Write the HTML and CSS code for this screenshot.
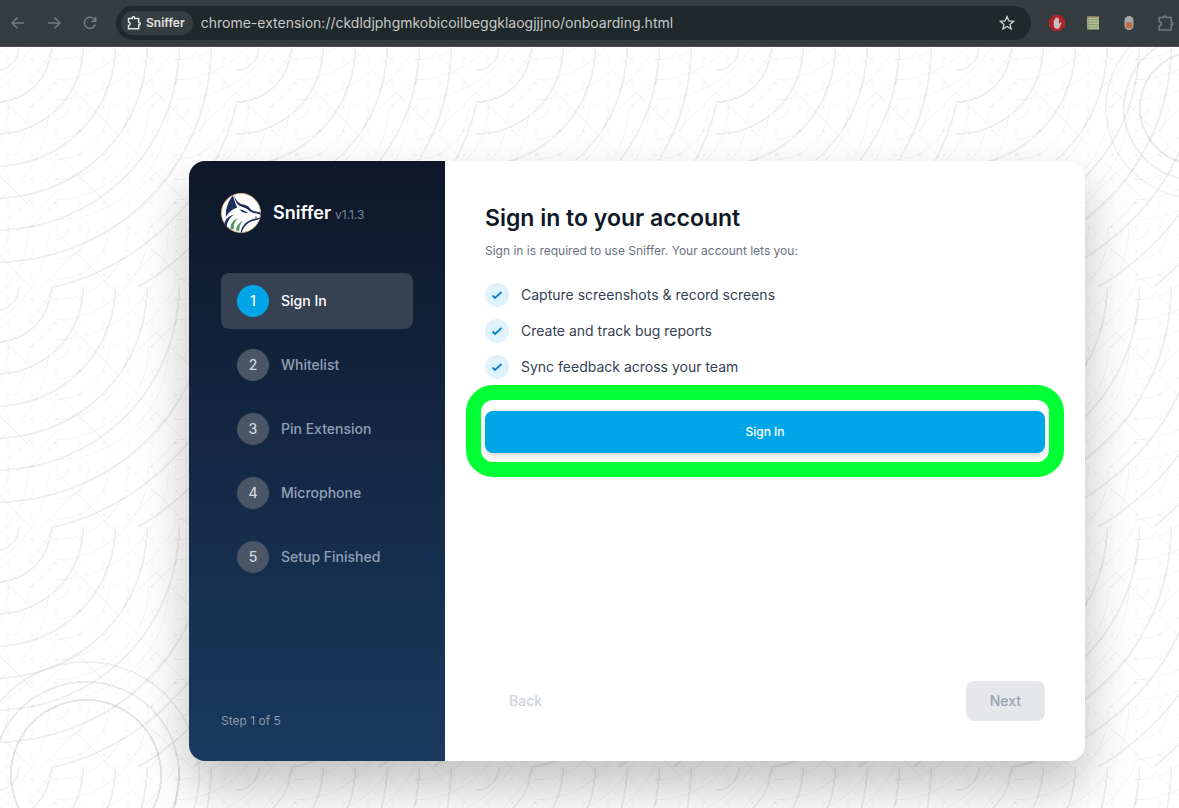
FILE: index.html
```html
<!DOCTYPE html>
<html lang="en">
<head>
<meta charset="utf-8">
<title>Sniffer</title>
<link rel="stylesheet" href="styles.css">
</head>
<body>
<header class="toolbar">
  <div class="nav-buttons">
    <button class="tool" aria-label="Back"><svg width="16" height="16" viewBox="0 0 16 16"><path d="M14 8H2.500M7.500 2.500 2 8l5.500 5.500"/></svg></button>
    <button class="tool" aria-label="Forward"><svg width="16" height="16" viewBox="0 0 16 16"><path d="M2 8h11.500M8.500 2.500 14 8l-5.500 5.500"/></svg></button>
    <button class="tool" aria-label="Reload"><svg width="16" height="16" viewBox="0 0 16 16"><path d="M13.300 9.500A5.600 5.600 0 1 1 12.600 4.600L13.600 6M13.700 2v4.200H9.500"/></svg></button>
  </div>
  <div class="address">
    <span class="chip"><svg width="16" height="16" viewBox="0 0 16 16"><path d="M2.500 3.500h3.800v-.6a1.200 1.200 0 0 1 2.400 0v.6h4v4h.4a1.200 1.200 0 0 1 0 2.400h-.4v3.800H2.500v-3.200c2.200-.2 2.200-3.400 0-3.600Z"/></svg>Sniffer</span>
    <input class="url" aria-label="Address" value="chrome-extension://ckdldjphgmkobicoilbeggklaogjjjno/onboarding.html">
    <button class="tool star" aria-label="Bookmark"><svg width="16" height="16" viewBox="0 0 16 16"><path d="m8 1.600 1.900 4.300 4.700.4-3.600 3.100 1.100 4.600L8 11.500 3.900 14l1.100-4.600-3.600-3.100 4.700-.4Z"/></svg></button>
  </div>
  <div class="extensions">
    <button class="tool" aria-label="Ad blocker"><svg width="16" height="16" viewBox="0 0 16 16"><path class="stop" d="M4.700 0h6.600L16 4.700v6.600L11.300 16H4.700L0 11.300V4.700Z"/><path class="palm" d="M4.800 10V5.200c0-.9 1.200-.9 1.200 0V3.800c0-1 1.300-1 1.300 0V3c0-1 1.400-1 1.400 0v1c0-.9 1.300-.9 1.300 0v5.200l1.200-1.700c.6-.7 1.500-.2 1.200.5l-1.700 4.200c-.5 1.100-1.200 1.600-2.500 1.600-2.300 0-3.400-1.300-3.400-3.800Z"/></svg></button>
    <button class="tool" aria-label="Notes"><svg width="16" height="16" viewBox="0 0 16 16"><path class="note" d="M2 1.500h12v13H2Z"/><path class="note-lines" d="M4 4.500h10M4 7h10M4 9.500h10M4 12h10"/><path class="note-edge" d="M2 2h12M3 2v12"/></svg></button>
    <button class="tool" aria-label="Recorder"><svg width="16" height="16" viewBox="0 0 16 16"><rect class="pill" x="3.500" y="1" width="9" height="14" rx="4.500"/><circle class="record" cx="8" cy="10.300" r="3.300"/></svg></button>
    <button class="tool" aria-label="Extensions"><svg width="18" height="16" viewBox="0 0 18 16"><path d="M2.200 2.500h4.300v-.3a1.300 1.300 0 0 1 2.600 0v.3h5v5h.6a1.200 1.200 0 0 1 0 2.400h-.6v5H2.200v-4c2.900-.3 2.900-4.100 0-4.400Z"/></svg></button>
  </div>
</header>
<main class="page">
  <div class="card">
    <aside class="sidebar">
      <div class="brand">
        <svg class="logo" width="40" height="40" viewBox="0 0 40 40" aria-hidden="true">
          <circle class="badge" cx="20" cy="20" r="19.500"/>
          <path class="navy" d="M11.700 2.500C7.500 8 4.500 15 4.800 24c3-4.500 6-7.500 11.500-9.400C14.500 11 13.200 6.500 11.700 2.500Z"/>
          <path class="navy" d="M12.500 1.800c2.300 4.300 4 8.500 9.500 9.800 4.300.8 6 2 7.500 4.700 2.800 2 6.500 2.500 10 3.200l.3 3.200c-1-1.500-2.300-2-4-2.100-3.500-.4-6.500-1.500-8.400-3.600-2.300-2.700-6.600-2.900-9.400-4.600C15 10.500 14 6 12.500 1.800Z"/>
          <path class="navy" d="M18.500 16.500c3 .3 5 1.300 8.500 3.500-3.200.1-5-.3-6.300-1.400Z"/>
          <path class="navy" d="M39.800 24.300c-1.200 2-3.500 2.800-6.200 3.100-5.500 1-10.600 4.700-12.800 12.200l-1.200.1C20.800 32 26 27.700 31.500 26.200c3-.8 6-.8 8.300-1.900Z"/>
          <path class="navy" d="M13 21.500c-5.500 1.500-9.700 5-9.500 10.300l2 2.300C6.300 28.500 8.500 24.500 13 21.500Z"/>
          <path class="green" d="M17 25c-4.500 1.700-7.800 5.700-7.500 11l3.200.6C12.500 32 13.500 28.500 17 25Z"/>
          <path class="green" d="M22 27.500c-4 2.300-6.700 5.500-6.800 9.800l3 .8c0-4.200 1-7.400 3.800-10.600Z"/>
          <path class="green" d="m33.700 23.300 2.200.4.100 1.500-1.500.1Z"/>
        </svg>
        <span class="brand-name">Sniffer</span>
        <span class="version">v1.1.3</span>
      </div>
      <ol class="steps">
        <li class="step current" aria-current="step"><span class="number">1</span>Sign In</li>
        <li class="step"><span class="number">2</span>Whitelist</li>
        <li class="step"><span class="number">3</span>Pin Extension</li>
        <li class="step"><span class="number">4</span>Microphone</li>
        <li class="step"><span class="number">5</span>Setup Finished</li>
      </ol>
      <p class="progress">Step 1 of 5</p>
    </aside>
    <section class="content">
      <h1 class="title">Sign in to your account</h1>
      <p class="lead">Sign in is required to use Sniffer. Your account lets you:</p>
      <ul class="benefits">
        <li class="benefit"><span class="tick"><svg width="12" height="12" viewBox="0 0 12 12"><path d="m1.500 6.500 2.500 2.500 6.500-6"/></svg></span>Capture screenshots &amp; record screens</li>
        <li class="benefit"><span class="tick"><svg width="12" height="12" viewBox="0 0 12 12"><path d="m1.500 6.500 2.500 2.500 6.500-6"/></svg></span>Create and track bug reports</li>
        <li class="benefit"><span class="tick"><svg width="12" height="12" viewBox="0 0 12 12"><path d="m1.500 6.500 2.500 2.500 6.500-6"/></svg></span>Sync feedback across your team</li>
      </ul>
      <div class="highlighted">
        <button class="sign-in">Sign In</button>
      </div>
      <footer class="actions">
        <button class="action back" disabled>Back</button>
        <button class="action next" disabled>Next</button>
      </footer>
    </section>
  </div>
</main>
</body>
</html>
```
FILE: styles.css
```css
* {
  box-sizing: border-box;
}

body {
  display: flex;
  flex-direction: column;
  min-height: 100vh;
  margin: 0;
  font-family: Inter, "Liberation Sans", sans-serif;
  font-size: 14px;
  line-height: 20px;
  color: #101828;
}

button,
input {
  font: inherit;
  border: 0;
  padding: 0;
}

h1,
p,
ol,
ul {
  margin: 0;
  padding: 0;
  list-style: none;
}

/* Browser toolbar */
.toolbar {
  display: flex;
  align-items: center;
  height: 47px;
  padding-left: 10px;
  background: #353d40;
  border-bottom: 1px solid #4a4c4e;
  overflow: hidden;
}

.tool {
  display: grid;
  place-items: center;
  flex: none;
  width: 16px;
  height: 16px;
  background: none;
}

.tool svg,
.chip svg {
  fill: none;
  stroke: #747b7d;
  stroke-width: 1.5;
}

.nav-buttons {
  display: flex;
  gap: 20px;
  margin-right: 18px;
}

.address {
  display: flex;
  align-items: center;
  flex: 1;
  height: 34px;
  padding: 0 16px 0 5px;
  border-radius: 17px;
  background: #1f282a;
}

.chip {
  display: flex;
  align-items: center;
  gap: 4px;
  height: 24px;
  padding: 0 8px 0 5px;
  margin-right: 8px;
  border-radius: 12px;
  background: #353d40;
  color: #e3e3e3;
  font-size: 12px;
  font-weight: 600;
}

.chip svg {
  stroke: #e3e3e3;
}

.url {
  flex: 1;
  min-width: 0;
  background: none;
  color: #c7c9c9;
}

.star svg {
  stroke: #d0d2d2;
  stroke-width: 1.3;
}

.extensions {
  display: flex;
  gap: 20px;
  margin-left: 18px;
  margin-right: 6px;
}

.tool .stop { fill: #b3222c; stroke: none; }
.tool .palm { fill: #c6c2c3; stroke: none; }
.tool .note { fill: #b3bf94; stroke: none; }
.tool .note-lines { stroke: #8d9c70; stroke-width: 1; }
.tool .note-edge { stroke: #94785a; stroke-width: 1; }
.tool .pill { fill: #a5a8a8; stroke: none; }
.tool .record { fill: #bd6c40; stroke: none; }

/* Patterned page */
.page {
  flex: 1;
  padding: 114px 94px 47px 189px;
  background-color: #fff;
  background-image:
    radial-gradient(circle at 1196px 61px, transparent 55px, rgba(16, 24, 40, 0.09) 55px 57px, transparent 57px 71px, rgba(16, 24, 40, 0.07) 71px 73px, transparent 73px 89px, rgba(16, 24, 40, 0.05) 89px 91px, transparent 91px),
    radial-gradient(circle at 86px 728px, transparent 74px, rgba(16, 24, 40, 0.11) 74px 76px, transparent 76px 92px, rgba(16, 24, 40, 0.08) 92px 94px, transparent 94px 112px, rgba(16, 24, 40, 0.06) 112px 114px, transparent 114px),
    repeating-radial-gradient(circle at 0 0, transparent 0 22px, rgba(0, 0, 0, 0.06) 22px 24px, transparent 24px 32px),
    repeating-radial-gradient(circle at 0 0, transparent 0 12px, rgba(0, 0, 0, 0.035) 12px 13px, transparent 13px 20px),
    radial-gradient(circle at 12px 12px, rgba(0, 0, 0, 0.06) 1px, transparent 1px),
    repeating-linear-gradient(45deg, transparent 0 24px, rgba(0, 0, 0, 0.03) 24px 25px, transparent 25px 56px),
    repeating-linear-gradient(-45deg, transparent 0 24px, rgba(0, 0, 0, 0.02) 24px 25px, transparent 25px 56px);
  background-size: auto, auto, 240px 240px, 120px 120px, 24px 24px, 80px 80px, 80px 80px;
  background-position: 0 0, 0 0, -4px 0, 56px 60px, -4px 0, -4px 0, -4px 0;
  background-repeat: no-repeat, no-repeat, repeat, repeat, repeat, repeat, repeat;
}

.card {
  display: flex;
  min-height: 600px;
  border-radius: 16px;
  background: #fff;
  box-shadow: 0 25px 50px rgba(0, 0, 0, 0.25);
}

/* Sidebar */
.sidebar {
  display: flex;
  flex-direction: column;
  flex: none;
  width: 256px;
  padding: 32px;
  border-radius: 16px 0 0 16px;
  background: linear-gradient(#0d1728, #101d33 18%, #1a3a5f);
}

.brand {
  display: flex;
  align-items: center;
  margin-bottom: 40px;
}

.logo { margin-right: 12px; }
.logo .badge { fill: #fff; stroke: #d8b98a; }
.logo .navy { fill: #1d2a5e; }
.logo .green { fill: #4f9561; }

.brand-name {
  margin-right: 4px;
  color: #fff;
  font-size: 18px;
  font-weight: 600;
}

.version {
  padding-top: 4px;
  color: #7c8798;
  font-size: 12px;
}

.steps {
  display: flex;
  flex-direction: column;
  gap: 8px;
}

.step {
  display: flex;
  align-items: center;
  gap: 12px;
  padding: 12px 16px;
  border-radius: 8px;
  color: #90a0b5;
  font-weight: 500;
}

.step.current {
  background: #364153;
  color: #fff;
}

.number {
  display: grid;
  place-items: center;
  width: 32px;
  height: 32px;
  border-radius: 50%;
  background: #4a5565;
  color: #d1d5dc;
}

.current .number {
  background: #00a5e8;
  color: #fff;
}

.progress {
  margin-top: auto;
  color: #8c99ab;
  font-size: 12px;
  line-height: 16px;
}

/* Step content */
.content {
  display: flex;
  flex-direction: column;
  flex: 1;
  min-width: 0;
  padding: 40px;
}

.title {
  font-size: 23px;
  font-weight: 600;
  line-height: 34px;
}

.lead {
  margin: 8px 0 24px;
  color: #6a7282;
  font-size: 12px;
  line-height: 16px;
}

.benefits {
  display: flex;
  flex-direction: column;
  gap: 12px;
  margin-bottom: 32px;
}

.benefit {
  display: flex;
  align-items: center;
  gap: 12px;
  color: #364153;
  line-height: 24px;
}

.tick {
  display: grid;
  place-items: center;
  width: 24px;
  height: 24px;
  border-radius: 50%;
  background: #dff2fe;
}

.tick svg {
  fill: none;
  stroke: #0084c7;
  stroke-width: 1.8;
}

.highlighted {
  position: relative;
}

/* Marker ring drawn over the button */
.highlighted::after {
  content: "";
  position: absolute;
  inset: -26px -19px -24px;
  border: 15px solid #00ff33;
  border-radius: 27px;
  pointer-events: none;
}

.sign-in {
  display: block;
  width: 100%;
  height: 42px;
  border-radius: 8px;
  background: #00a5e8;
  box-shadow: 0 4px 6px rgba(0, 0, 0, 0.1), 0 2px 4px rgba(0, 0, 0, 0.06);
  color: #fff;
  font-size: 12px;
  font-weight: 500;
}

.actions {
  display: flex;
  justify-content: space-between;
  margin-top: auto;
}

.action {
  height: 40px;
  padding: 0 24px;
  border-radius: 8px;
  font-weight: 500;
}

.back {
  background: none;
  color: #d1d5dc;
}

.next {
  background: #e5e7eb;
  color: #99a1af;
}
```
